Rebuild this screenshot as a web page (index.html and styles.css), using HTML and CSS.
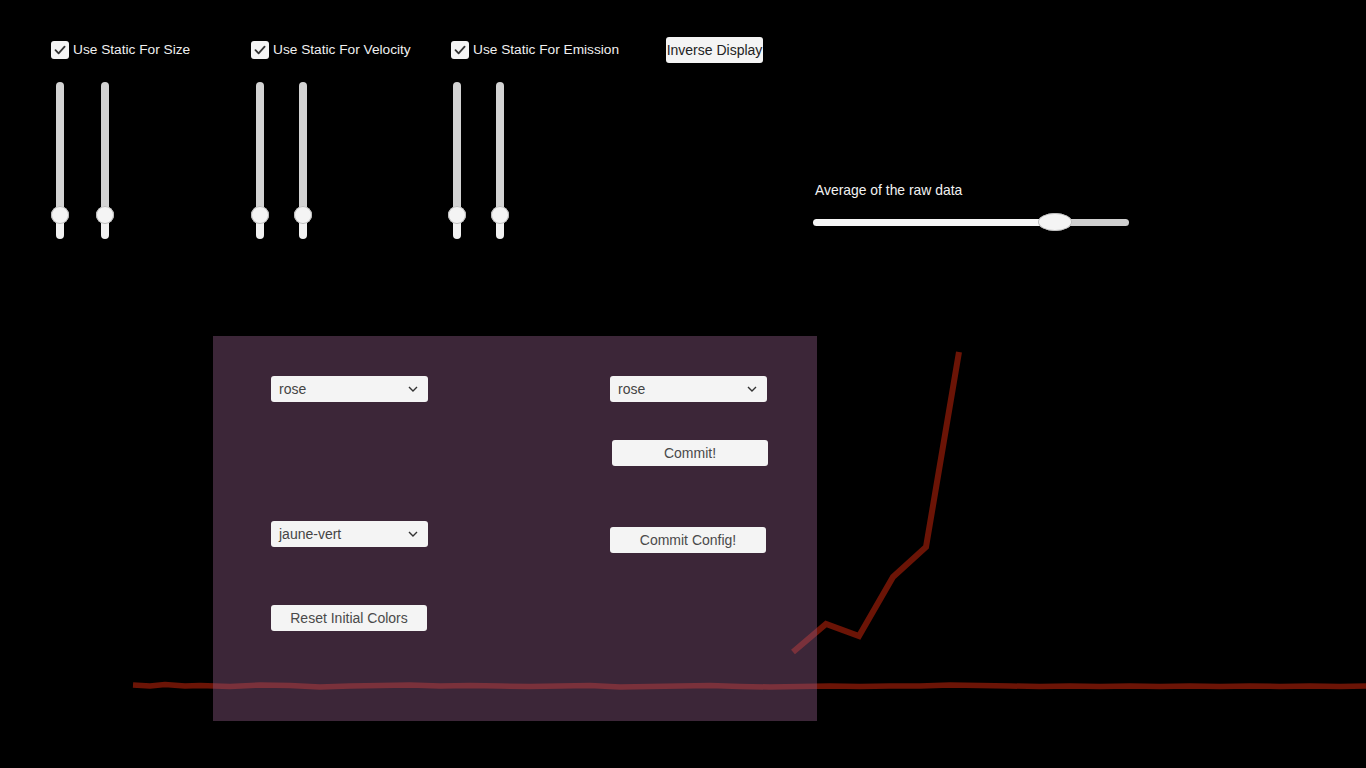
FILE: index.html
```html
<!DOCTYPE html>
<html>
<head>
<meta charset="utf-8">
<link rel="stylesheet" href="styles.css">
</head>
<body>
<svg class="chart" width="1366" height="768" viewBox="0 0 1366 768">
  <polyline class="base-line" points="133,685 150,686 165,684.5 185,686 200,685.5 230,686.5 260,685 290,685.5 320,687 350,686 380,685.5 410,685 440,686 470,685.5 500,686 530,686.5 560,686 590,685.5 620,687 650,686.5 680,686 710,685.5 740,686.5 770,687 800,686.5 830,686 860,686.5 890,686 920,686 950,685 980,685.5 1010,686 1040,686.5 1070,686 1100,686.5 1130,686 1160,686.5 1190,686 1220,686.5 1250,686 1280,686.5 1310,686 1340,686.5 1366,686"/>
  <polyline class="data-line" points="793,652 826,624 859,636 893,577 926,547 959,352"/>
</svg>

<div class="top">
  <div class="group">
    <label class="check-row"><span class="checkbox"><svg width="18" height="18" viewBox="0 0 18 18"><path d="M4.5 9.2 L7.6 12.3 L13.6 5.6" fill="none" stroke="#333" stroke-width="1.8" stroke-linecap="round" stroke-linejoin="round"/></svg></span><span class="check-label">Use Static For Size</span></label>
    <div class="sliders off5 wide">
      <div class="vtrack"><span class="vhandle"></span></div>
      <div class="vtrack"><span class="vhandle"></span></div>
    </div>
  </div>
  <div class="group">
    <label class="check-row"><span class="checkbox"><svg width="18" height="18" viewBox="0 0 18 18"><path d="M4.5 9.2 L7.6 12.3 L13.6 5.6" fill="none" stroke="#333" stroke-width="1.8" stroke-linecap="round" stroke-linejoin="round"/></svg></span><span class="check-label">Use Static For Velocity</span></label>
    <div class="sliders off5">
      <div class="vtrack"><span class="vhandle"></span></div>
      <div class="vtrack"><span class="vhandle"></span></div>
    </div>
  </div>
  <div class="group">
    <label class="check-row"><span class="checkbox"><svg width="18" height="18" viewBox="0 0 18 18"><path d="M4.5 9.2 L7.6 12.3 L13.6 5.6" fill="none" stroke="#333" stroke-width="1.8" stroke-linecap="round" stroke-linejoin="round"/></svg></span><span class="check-label">Use Static For Emission</span></label>
    <div class="sliders off2">
      <div class="vtrack"><span class="vhandle"></span></div>
      <div class="vtrack"><span class="vhandle"></span></div>
    </div>
  </div>
  <button class="inverse-btn">Inverse Display</button>
  <div class="avg-block">
    <div class="avg-label">Average of the raw data</div>
    <div class="htrack"><span class="hhandle"></span></div>
  </div>
</div>

<div class="panel">
  <div class="col col-left">
    <div class="select"><span>rose</span><svg class="chev" width="10" height="6" viewBox="0 0 10 6"><path d="M1 1 L5 5 L9 1" fill="none" stroke="#333" stroke-width="1.4"/></svg></div>
    <div class="select sel-second"><span>jaune-vert</span><svg class="chev" width="10" height="6" viewBox="0 0 10 6"><path d="M1 1 L5 5 L9 1" fill="none" stroke="#333" stroke-width="1.4"/></svg></div>
    <button class="btn btn-reset">Reset Initial Colors</button>
  </div>
  <div class="col col-right">
    <div class="select"><span>rose</span><svg class="chev" width="10" height="6" viewBox="0 0 10 6"><path d="M1 1 L5 5 L9 1" fill="none" stroke="#333" stroke-width="1.4"/></svg></div>
    <button class="btn btn-commit">Commit!</button>
    <button class="btn btn-config">Commit Config!</button>
  </div>
</div>
</body>
</html>
```

FILE: styles.css
```css
html, body {
  margin: 0;
  padding: 0;
}
body {
  width: 1366px;
  height: 768px;
  background: #000;
  overflow: hidden;
  position: relative;
  font-family: "Liberation Sans", Arial, sans-serif;
  color: #f2f2f2;
}
.chart {
  position: absolute;
  left: 0;
  top: 0;
  z-index: 0;
}
.base-line {
  fill: none;
  stroke: #6b1406;
  stroke-width: 5.5;
  stroke-linejoin: round;
}
.data-line {
  fill: none;
  stroke: #6b1406;
  stroke-width: 6;
  stroke-linejoin: miter;
}
.top {
  position: relative;
  z-index: 1;
  display: flex;
  align-items: flex-start;
  padding: 41px 0 0 51px;
}
.group {
  width: 200px;
  display: flex;
  flex-direction: column;
}
.check-row {
  display: flex;
  align-items: center;
  height: 18px;
  gap: 4px;
}
.checkbox {
  width: 18px;
  height: 18px;
  border-radius: 3px;
  background: #f4f4f4;
  display: block;
}
.checkbox svg {
  display: block;
}
.check-label {
  font-size: 13.7px;
  line-height: 16px;
  white-space: nowrap;
  color: #f0f0f0;
}
.sliders {
  display: flex;
  gap: 35px;
  margin-top: 23px;
}
.sliders.wide { gap: 37px; }
.off5 { padding-left: 5px; }
.off2 { padding-left: 2px; }
.vtrack {
  position: relative;
  width: 8px;
  height: 157px;
  border-radius: 4px;
  background: linear-gradient(to bottom, #d3d3d3 0, #d3d3d3 133px, #f2f2f2 133px, #f2f2f2 100%);
}
.vhandle {
  position: absolute;
  left: -5px;
  top: 124px;
  width: 18px;
  height: 18px;
  border-radius: 50%;
  background: #f4f4f4;
  box-shadow: 0 0 0 1px #bbb inset;
}
.inverse-btn {
  margin: -4px 0 0 15px;
  width: 97px;
  height: 26px;
  padding: 0;
  border: none;
  border-radius: 3px;
  background: #f4f4f4;
  color: #222;
  font-family: "Liberation Sans", Arial, sans-serif;
  font-size: 14px;
  white-space: nowrap;
}
.avg-block {
  margin: 141px 0 0 50px;
  width: 316px;
}
.avg-label {
  font-size: 13.9px;
  line-height: 16px;
  padding-left: 2px;
  color: #f2f2f2;
}
.htrack {
  position: relative;
  margin-top: 21px;
  width: 316px;
  height: 7px;
  border-radius: 4px;
  background: linear-gradient(to right, #f6f6f6 0, #f6f6f6 240px, #cfcfcf 240px, #cfcfcf 100%);
}
.hhandle {
  position: absolute;
  left: 225px;
  top: -6px;
  width: 34px;
  height: 18px;
  border-radius: 50%;
  background: #f4f4f4;
  box-shadow: 0 0 0 1px #bbb inset;
}
.panel {
  position: relative;
  z-index: 1;
  margin: 97px 0 0 213px;
  width: 604px;
  height: 385px;
  box-sizing: border-box;
  padding: 40px 0 0 58px;
  background: rgba(143, 90, 133, 0.42);
  display: flex;
  align-items: flex-start;
}
.col {
  display: flex;
  flex-direction: column;
  width: 157px;
}
.col-right {
  margin-left: 182px;
}
.select {
  box-sizing: border-box;
  width: 157px;
  height: 26px;
  border-radius: 3px;
  background: #f4f4f4;
  color: #444;
  font-size: 14px;
  display: flex;
  align-items: center;
  justify-content: space-between;
  padding: 0 10px 0 8px;
}
.chev {
  display: block;
}
.sel-second {
  margin-top: 119px;
}
.btn {
  box-sizing: border-box;
  width: 156px;
  height: 26px;
  padding: 0;
  border: none;
  border-radius: 3px;
  background: #f4f4f4;
  color: #4a4a4a;
  font-family: "Liberation Sans", Arial, sans-serif;
  font-size: 14px;
  white-space: nowrap;
}
.btn-reset {
  margin-top: 58px;
}
.btn-commit {
  margin: 38px 0 0 2px;
}
.btn-config {
  margin-top: 61px;
}
```
